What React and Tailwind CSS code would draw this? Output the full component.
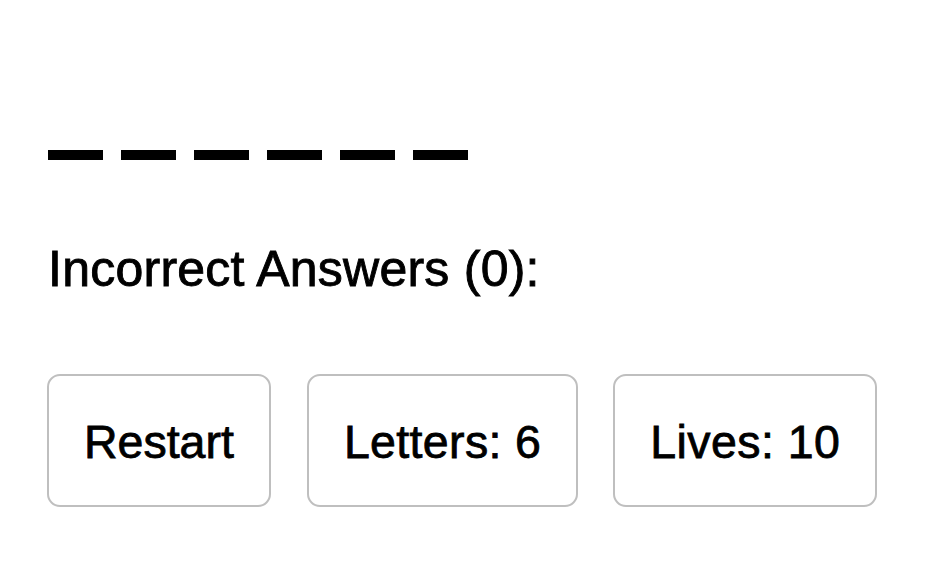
export default function App() {
  const dashes = [0, 1, 2, 3, 4, 5];
  const btn =
    "h-[133px] px-[35px] flex items-center border-2 border-[#bfbfbf] rounded-[13px] bg-white text-[46.5px] leading-none pt-[4px] [-webkit-text-stroke:0.8px_black]";
  return (
    <div
      className="w-[928px] h-[564px] bg-white text-black overflow-hidden pl-[48px]"
      style={{ fontFamily: '"Liberation Sans", Arial, sans-serif' }}
    >
      <div className="flex gap-[18px] pt-[150px]">
        {dashes.map((d) => (
          <div key={d} className="w-[55px] h-[10px] bg-black" />
        ))}
      </div>
      <h2 className="mt-[79px] text-[50px] leading-[60px] font-normal tracking-[0.25px] [-webkit-text-stroke:0.9px_black]">
        Incorrect Answers (0):
      </h2>
      <div className="flex mt-[75px] -ml-[1px]">
        <button className={"tracking-[0px] " + btn}>Restart</button>
        <button className={"ml-[36px] tracking-[0.35px] " + btn}>Letters: 6</button>
        <button className={"ml-[35px] tracking-[0.45px] " + btn}>Lives: 10</button>
      </div>
    </div>
  );
}
